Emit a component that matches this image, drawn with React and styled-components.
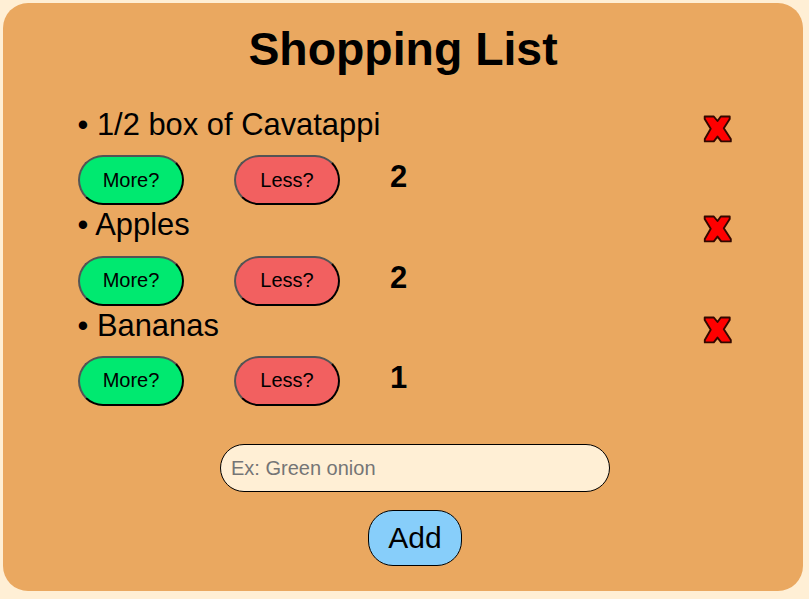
import React from "react";
import styled, { createGlobalStyle } from "styled-components";

const GlobalStyle = createGlobalStyle`
  *, *::before, *::after { box-sizing: border-box; }
  body {
    margin: 0;
    background: #ffefd5;
    color: #000;
    font-family: "Liberation Sans", Arial, sans-serif;
  }
`;

const Page = styled.div`
  padding: 3px 6px 8px 3px;
`;

const Card = styled.main`
  display: flex;
  flex-direction: column;
  height: 588px;
  padding: 19px 70px 0 75px;
  border-radius: 25px;
  background: #eaa860;
`;

const Title = styled.h1`
  margin: 0 5px 32px 0;
  text-align: center;
  font-size: 46.4px;
  line-height: 54px;
`;

const List = styled.ul`
  margin: 0;
  padding: 0;
  list-style: none;
`;

const Item = styled.li`
  height: 100.4px;
`;

const ItemHeader = styled.div`
  display: flex;
  justify-content: space-between;
  height: 47.2px;
`;

const ItemName = styled.span`
  font-size: 30.9px;
  line-height: 33px;
  margin-left: -0.5px;
`;

const RemoveButton = styled.button`
  display: flex;
  width: 30px;
  height: 30px;
  margin-top: 6px;
  padding: 0;
  border: 0;
  background: none;
`;

const Controls = styled.div`
  display: flex;
  gap: 50px;
`;

const CountButton = styled.button`
  width: 106px;
  height: 50px;
  padding: 0;
  border: 2px outset #000;
  border-radius: 25px;
  background: ${(p) => (p.$tone === "more" ? "#00e970" : "#f26060")};
  color: #000;
  font: 20px "Liberation Sans", Arial, sans-serif;
`;

const Count = styled.strong`
  font-size: 31px;
  line-height: 43px;
`;

const AddForm = styled.form`
  display: flex;
  flex-direction: column;
  align-items: center;
  gap: 18px;
  margin-top: 34.8px;
  padding-left: 19px;
`;

const ItemInput = styled.input`
  width: 390px;
  height: 48px;
  padding: 1px 10px 0;
  border: 1px solid #000;
  border-radius: 25px;
  background: #ffefd5;
  font: 20px "Liberation Sans", Arial, sans-serif;
  &::placeholder { color: #757575; }
`;

const AddButton = styled.button`
  width: 94px;
  height: 56px;
  padding: 0;
  border: 1px solid #000;
  border-radius: 25px;
  background: #87cefa;
  color: #000;
  font: 30px "Liberation Sans", Arial, sans-serif;
`;

const items = [
  { name: "1/2 box of Cavatappi", count: 2 },
  { name: "Apples", count: 2 },
  { name: "Bananas", count: 1 },
];

function CrossIcon() {
  return (
    <svg width="30" height="30" viewBox="0 0 30 30" aria-hidden="true">
      <path
        d="M1.7 2.5H10.8L14.5 7L17.8 2.5H26.7V4.9L20.8 14.3L27.8 24.9V27.4H18.2L14.5 22.6L10.8 27.4H1.8V24.9L7.7 14.7L1.7 4.9Z"
        fill="#ff0000"
        stroke="#330800"
        strokeWidth="1.9"
        strokeLinejoin="round"
      />
    </svg>
  );
}

export default function App() {
  return (
    <Page>
      <GlobalStyle />
      <Card>
        <Title>Shopping List</Title>
        <List>
          {items.map((item) => (
            <Item key={item.name}>
              <ItemHeader>
                <ItemName>• {item.name}</ItemName>
                <RemoveButton aria-label={`Remove ${item.name}`}>
                  <CrossIcon />
                </RemoveButton>
              </ItemHeader>
              <Controls>
                <CountButton $tone="more">More?</CountButton>
                <CountButton $tone="less">Less?</CountButton>
                <Count>{item.count}</Count>
              </Controls>
            </Item>
          ))}
        </List>
        <AddForm onSubmit={(e) => e.preventDefault()}>
          <ItemInput placeholder="Ex: Green onion" />
          <AddButton>Add</AddButton>
        </AddForm>
      </Card>
    </Page>
  );
}
